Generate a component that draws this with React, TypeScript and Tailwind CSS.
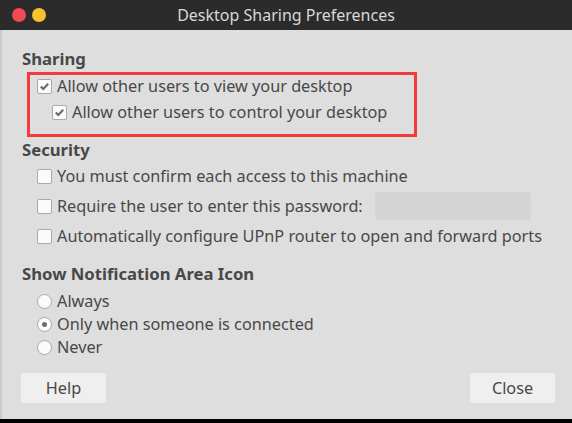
import React from "react";

const font = { fontFamily: '"Noto Sans", "Open Sans", sans-serif' };

function CheckBox({ checked = false }: { checked?: boolean }) {
  return (
    <span className="flex h-[15px] w-[15px] shrink-0 items-center justify-center rounded-[2px] border border-[#a9a9a9] bg-[#fbfbfb]">
      {checked && (
        <svg width="11" height="11" viewBox="0 0 11 11">
          <path d="M1.8 5.6 L4.3 8 L9.2 2.8" fill="none" stroke="#6b6b6b" strokeWidth="2.2" />
        </svg>
      )}
    </span>
  );
}

function Radio({ checked = false }: { checked?: boolean }) {
  return (
    <span className="flex h-[15px] w-[15px] shrink-0 items-center justify-center rounded-full border border-[#a9a9a9] bg-[#fbfbfb]">
      {checked && <span className="h-[5px] w-[5px] rounded-full bg-[#6b6b6b]" />}
    </span>
  );
}

function Row({ children, label, className = "" }: { children: React.ReactNode; label: string; className?: string }) {
  return (
    <div className={`flex h-[22px] items-center ${className}`}>
      {children}
      <span className="ml-[5px] whitespace-nowrap">{label}</span>
    </div>
  );
}

export default function App() {
  return (
    <div className="flex h-[423px] w-[572px] flex-col bg-black text-[16.25px] text-[#484848]" style={font}>
      {/* title bar */}
      <div className="relative flex h-[30px] shrink-0 items-center justify-center bg-[#2b2b2b]">
        <div className="absolute left-[12px] top-[8px] flex gap-[6px]">
          <span className="h-[14px] w-[14px] rounded-full bg-[#f04a52]" />
          <span className="h-[14px] w-[14px] rounded-full bg-[#f8c22e]" />
        </div>
        <span className="text-[16px] text-[#d8d8d8]">Desktop Sharing Preferences</span>
      </div>

      <div className="flex flex-1 flex-col border-l-2 border-[#c9c9c9] bg-[#dedede] pl-[20px] pt-[17px]">
        <div className="flex h-[24px] items-center text-[16.7px] font-bold">Sharing</div>

        <div className="ml-[5px] mt-[1px] w-[390px] border-[3px] border-[#f23b3b] pb-[11px]">
          <Row label="Allow other users to view your desktop" className="pl-[7px]">
            <CheckBox checked />
          </Row>
          <Row label="Allow other users to control your desktop" className="mt-[4px] pl-[22px]">
            <CheckBox checked />
          </Row>
        </div>

        <div className="mt-[1px] flex h-[24px] items-center text-[16.7px] font-bold">Security</div>
        <div className="mt-[3px] flex flex-col gap-[4px] pl-[15px]">
          <Row label="You must confirm each access to this machine">
            <CheckBox />
          </Row>
          <div className="flex h-[30px] items-center">
            <CheckBox />
            <span className="ml-[5px] whitespace-nowrap">Require the user to enter this password:</span>
            <div className="ml-[12px] h-[28px] w-[156px] rounded-[3px] bg-[#d4d4d4]" />
          </div>
          <Row label="Automatically configure UPnP router to open and forward ports">
            <CheckBox />
          </Row>
        </div>

        <div className="mt-[15px] flex h-[24px] items-center text-[16.7px] font-bold">
          Show Notification Area Icon
        </div>
        <div className="mt-[4px] flex flex-col pl-[15px]">
          <div className="flex h-[23px] items-center">
            <Radio />
            <span className="ml-[5px]">Always</span>
          </div>
          <div className="flex h-[23px] items-center">
            <Radio checked />
            <span className="ml-[5px]">Only when someone is connected</span>
          </div>
          <div className="flex h-[23px] items-center">
            <Radio />
            <span className="ml-[5px]">Never</span>
          </div>
        </div>

        <div className="-ml-[1px] mt-[14px] flex w-[534px] justify-between">
          <button className="h-[30px] w-[85px] rounded-[2px] bg-[#efefef]">Help</button>
          <button className="h-[30px] w-[85px] rounded-[2px] bg-[#efefef]">Close</button>
        </div>
      </div>

      <div className="h-[4px] shrink-0 bg-black" />
    </div>
  );
}
